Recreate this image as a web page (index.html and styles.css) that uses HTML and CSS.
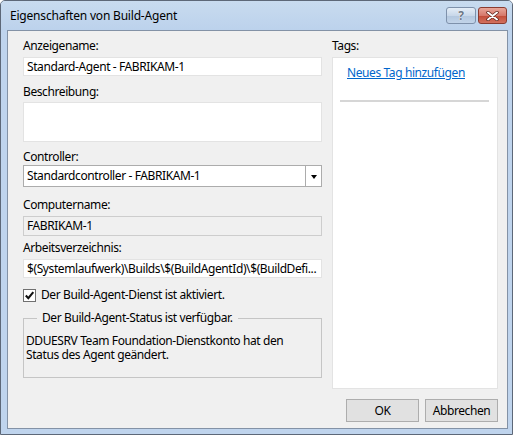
FILE: index.html
```html
<!DOCTYPE html>
<html lang="de">
<head>
<meta charset="utf-8">
<title>Eigenschaften von Build-Agent</title>
<link rel="stylesheet" href="styles.css">
</head>
<body>
<div class="window">
  <div class="titlebar">
    <span class="title">Eigenschaften von Build-Agent</span>
    <div class="caption-btns">
      <span class="cbtn help">?</span>
      <span class="cbtn close">
        <svg width="13" height="10" viewBox="0 0 13 10"><path d="M2 1.5 L11 8.5 M11 1.5 L2 8.5" stroke="#5a1f16" stroke-width="3.4" stroke-linecap="round"/><path d="M2 1.5 L11 8.5 M11 1.5 L2 8.5" stroke="#fff" stroke-width="2" stroke-linecap="round"/></svg>
      </span>
    </div>
  </div>
  <div class="client">
    <div class="main">
      <div class="left">
        <div class="label l1">Anzeigename:</div>
        <div class="field input">Standard-Agent - FABRIKAM-1</div>
        <div class="label l2">Beschreibung:</div>
        <div class="field textarea"></div>
        <div class="label l3">Controller:</div>
        <div class="field combo">
          <span class="combo-text">Standardcontroller - FABRIKAM-1</span>
          <span class="combo-btn"><span class="arrow"></span></span>
        </div>
        <div class="label l4">Computername:</div>
        <div class="field readonly">FABRIKAM-1</div>
        <div class="label l5">Arbeitsverzeichnis:</div>
        <div class="field input">$(Systemlaufwerk)\Builds\$(BuildAgentId)\$(BuildDefi...</div>
        <div class="check-row">
          <span class="checkbox"><svg width="11" height="11" viewBox="0 0 11 11"><path d="M1.8 5.6 L4.3 8.2 L9.3 2.2" fill="none" stroke="#111" stroke-width="2.1"/></svg></span>
          <span>Der Build-Agent-Dienst ist aktiviert.</span>
        </div>
        <fieldset class="group">
          <legend>Der Build-Agent-Status ist verfügbar.</legend>
          <p>DDUESRV Team Foundation-Dienstkonto hat den Status des Agent geändert.</p>
        </fieldset>
      </div>
      <div class="right">
        <div class="label l1">Tags:</div>
        <div class="tags">
          <a class="tag-link" href="#">Neues Tag hinzufügen</a>
          <div class="tag-sep"></div>
        </div>
      </div>
    </div>
    <div class="buttons">
      <span class="btn">OK</span>
      <span class="btn">Abbrechen</span>
    </div>
  </div>
</div>
</body>
</html>
```
FILE: styles.css
```css
* { box-sizing: border-box; }
html, body { margin: 0; padding: 0; background: #fff; }
body {
  font-family: "Noto Sans", "Open Sans", sans-serif;
  font-size: 12px;
  color: #000;
  letter-spacing: -0.4px;
}
.window {
  width: 513px;
  height: 435px;
  border: 1px solid #5d6878;
  border-radius: 5px 5px 0 0;
  background: #bfd4ed;
  padding: 0 4px 5px 6px;
  display: flex;
  flex-direction: column;
}
.titlebar {
  height: 29px;
  display: flex;
  justify-content: space-between;
  align-items: flex-start;
  background: linear-gradient(#c8dbef, #bcd2ec);
  margin: 0 -4px 0 -6px;
  padding: 0 5px 0 9px;
  border-radius: 4px 4px 0 0;
}
.title {
  line-height: 16px;
  margin-top: 7px;
  letter-spacing: -0.2px;
}
.caption-btns {
  display: flex;
  gap: 2px;
  margin-top: 6px;
}
.cbtn {
  height: 17px;
  border-radius: 3px;
  display: flex;
  align-items: center;
  justify-content: center;
  letter-spacing: 0;
}
.help {
  width: 30px;
  border: 1px solid #7e91ab;
  background: linear-gradient(#e4edf7 0%, #c9d8ea 50%, #b3c7de 51%, #c2d4e9 100%);
  color: #6b7685;
  font-weight: bold;
  font-size: 12px;
  text-shadow: 0 0 1px #fff, 0 0 1px #fff;
}
.close {
  width: 29px;
  border: 1px solid #8a3b30;
  background: linear-gradient(#e8a699 0%, #d6786a 50%, #c24a36 51%, #d2715f 100%);
}
.client {
  flex: 1;
  background: #f0f0f0;
  border: 1px solid #8392a6;
  padding: 7px 9px 5px 15px;
  display: flex;
  flex-direction: column;
}
.main {
  display: grid;
  grid-template-columns: 299px 166px;
  column-gap: 10px;
  align-items: start;
}
.left, .right {
  display: flex;
  flex-direction: column;
}
.label {
  line-height: 16px;
  height: 16px;
}
.field {
  background: #fff;
  border: 1px solid #e3e3e3;
  line-height: 16px;
  padding: 0 0 0 3px;
  white-space: nowrap;
  overflow: hidden;
}
.input { height: 19px; margin-top: 3px; padding-top: 1px; }
.l2 { margin-top: 8px; }
.textarea { height: 40px; margin-top: 2px; }
.l3 { margin-top: 7px; }
.combo {
  height: 22px;
  margin-top: 0;
  border-color: #acacac;
  display: flex;
  padding: 0;
}
.combo-text { flex: 1; padding: 2px 0 0 3px; }
.combo-btn {
  width: 16px;
  border-left: 1px solid #acacac;
  display: flex;
  align-items: center;
  justify-content: center;
}
.arrow {
  width: 0; height: 0;
  border-left: 3.5px solid transparent;
  border-right: 3.5px solid transparent;
  border-top: 4px solid #000;
  margin-top: 1px;
}
.l4 { margin-top: 10px; }
.readonly {
  height: 20px;
  margin-top: 3px;
  background: #f0f0f0;
  border-color: #cdcdcd;
  padding-top: 1px;
}
.l5 { margin-top: 4px; }
.check-row {
  margin-top: 9px;
  height: 16px;
  line-height: 16px;
  display: flex;
  align-items: center;
  gap: 5px;
}
.checkbox {
  width: 13px;
  height: 13px;
  border: 1px solid #707070;
  background: #fff;
  display: flex;
  align-items: center;
  justify-content: center;
}
.group {
  margin: 7px 0 0 0;
  border: 1px solid #c5c5c5;
  padding: 2px 4px 16px 2px;
  min-width: 0;
  height: 68px;
}
.group legend {
  margin-left: 11px;
  padding: 0 5px;
  line-height: 16px;
}
.group p {
  margin: 6px 0 0 0;
  line-height: 14px;
}
.tags {
  height: 332px;
  margin-top: 3px;
  background: #fff;
  border: 1px solid #e3e3e3;
  padding: 7px 7px;
}
.tag-link {
  display: block;
  margin-left: 7px;
  line-height: 16px;
  color: #0066cc;
  text-decoration: underline;
}
.tag-sep {
  height: 2px;
  background: #d6d6d6;
  margin-top: 19px;
  margin-right: 1px;
}
.buttons {
  margin-top: 10px;
  display: flex;
  justify-content: flex-end;
  gap: 6px;
}
.btn {
  width: 73px;
  height: 23px;
  border: 1px solid #adadad;
  background: #e1e1e1;
  display: flex;
  align-items: center;
  justify-content: center;
}
```
